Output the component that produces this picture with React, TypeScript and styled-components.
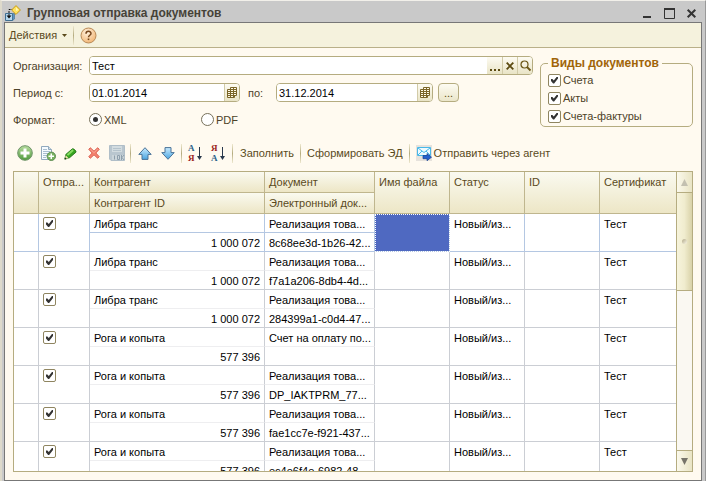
import React from "react";
import styled, { createGlobalStyle, css } from "styled-components";

const line = "#b5ac80";
const brown = "#5a4a1c";

const GlobalStyle = createGlobalStyle`
  *, *::before, *::after { box-sizing: border-box; }
  body { margin: 0; background: #c9c9c9; }
  body, button, input { font: 11px/14px "Liberation Sans", Arial, sans-serif; }
  button { margin: 0; padding: 0; border: 0; background: none; color: inherit; white-space: nowrap; }
  svg { display: block; flex: none; overflow: visible; }
`;

const Window = styled.main`
  display: flex;
  flex-direction: column;
  height: 100vh;
  padding: 0 3px 0 2px;
  background: #c9c9c9;
  border-top: 1px solid #f2f0ea;
  border-left: 2px solid #dedacb;
  border-right: 1px solid #999;
`;

const TitleBar = styled.header`
  display: flex;
  align-items: center;
  gap: 6px;
  height: 21px;
  flex: none;
  padding: 3px 3px 0 0;
  color: #464238;
`;

const Title = styled.h1`
  flex: 1;
  margin: 0;
  font-size: 12px;
  line-height: 16px;
  font-weight: bold;
  white-space: nowrap;
`;

const WindowButton = styled.button`
  display: grid;
  place-items: center;
  width: 16px;
  height: 16px;
`;

const Body = styled.div`
  flex: 1;
  min-height: 0;
  display: flex;
  flex-direction: column;
  border: 1px solid #777;
  background: #fffaf0;
`;

const MenuBar = styled.nav`
  display: flex;
  align-items: center;
  flex: none;
  height: 25px;
  padding: 0 4px;
  background: #f5f2dd;
  border-bottom: 1px solid #b9b088;
  color: ${brown};
`;

const MenuButton = styled.button`
  display: flex;
  align-items: center;
  gap: 5px;
`;

const Separator = styled.span<{ $gap: number }>`
  width: 1px;
  height: 19px;
  flex: none;
  margin: 0 ${(p) => p.$gap}px;
  background: linear-gradient(#eee8cf, #b5ac80 50%, #eee8cf);
`;

const Content = styled.div`
  flex: 1;
  min-height: 0;
  display: flex;
  flex-direction: column;
  padding: 8px;
`;

const Filters = styled.form`
  display: flex;
  align-items: flex-start;
  gap: 7px;
  flex: none;
  color: #4d4228;
`;

const Fields = styled.div`
  flex: 1;
  min-width: 0;
  display: flex;
  flex-direction: column;
  gap: 8px;
`;

const FieldRow = styled.div`
  display: flex;
  align-items: center;
  height: 19px;
`;

const Label = styled.label<{ $width: number; $indent?: boolean }>`
  width: ${(p) => p.$width}px;
  padding-left: ${(p) => (p.$indent ? 8 : 0)}px;
  flex: none;
  white-space: nowrap;
`;

const InputBox = styled.div<{ $width?: number }>`
  display: flex;
  height: 19px;
  border: 1px solid ${line};
  border-radius: 4px;
  overflow: hidden;
  background: #fff;
  ${(p) => (p.$width ? css`width: ${p.$width}px;` : css`flex: 1; min-width: 0;`)}
`;

const TextInput = styled.input`
  flex: 1;
  min-width: 0;
  border: 0;
  padding: 0 2px;
  background: #fff;
  color: #000;
  outline: 0;
`;

const InputButton = styled.button<{ $plain?: boolean }>`
  display: grid;
  place-items: center;
  width: 15px;
  flex: none;
  color: #5c4b12;
  background: linear-gradient(#fdfbf2, #e9e4c6);
  ${(p) => !p.$plain && css`border-left: 1px solid #d2cba8;`}
`;

const MoreButton = styled.button`
  display: grid;
  place-items: center;
  width: 21px;
  height: 19px;
  margin-left: 5px;
  border: 1px solid ${line};
  border-radius: 4px;
  background: linear-gradient(#fdfbf2, #ebe6ca);
  color: #5c4b12;
`;

const Choice = styled.label<{ $width?: number }>`
  display: flex;
  align-items: center;
  gap: 2px;
  height: 18px;
  white-space: nowrap;
  ${(p) => p.$width && css`width: ${p.$width}px;`}
`;

const CheckBox = styled.input.attrs({ type: "checkbox" })`
  appearance: none;
  display: block;
  width: 13px;
  height: 13px;
  flex: none;
  margin: 0;
  border: 1px solid #8f8560;
  border-radius: 2px;
  background: #fff;
  &:checked::before {
    content: "";
    display: block;
    width: 7px;
    height: 7px;
    margin: 2px;
    background: #333;
    clip-path: polygon(0 35%, 20% 35%, 40% 58%, 85% 0, 100% 0, 100% 28%, 45% 100%, 30% 100%, 0 65%);
  }
`;

const Radio = styled.input.attrs({ type: "radio" })`
  appearance: none;
  display: grid;
  place-items: center;
  width: 13px;
  height: 13px;
  flex: none;
  margin: 0;
  border: 1px solid #77705a;
  border-radius: 50%;
  background: #fff;
  &:checked::before {
    content: "";
    width: 5px;
    height: 5px;
    border-radius: 50%;
    background: #333;
  }
`;

const Group = styled.fieldset`
  width: 153px;
  height: 71px;
  flex: none;
  margin: 0;
  padding: 1px 7px 0;
  border: 1px solid ${line};
  border-radius: 5px;
`;

const Legend = styled.legend`
  padding: 0 3px;
  color: #a06408;
  font-size: 12px;
  font-weight: bold;
  line-height: 14px;
`;

const ToolBar = styled.div`
  display: flex;
  align-items: center;
  flex: none;
  height: 24px;
  margin: 12px 0 6px;
  color: ${brown};
`;

const ToolButton = styled.button`
  display: grid;
  place-items: center;
  width: 23px;
  height: 24px;
  flex: none;
`;

const TextButton = styled.button`
  display: flex;
  align-items: center;
  gap: 2px;
  height: 24px;
  padding: 0 5px;
`;

const Grid = styled.section`
  flex: 1;
  min-height: 0;
  display: flex;
  border: 1px solid ${line};
  background: #fff;
`;

const Viewport = styled.div`
  flex: 1;
  min-width: 0;
  overflow: hidden;
`;

const Table = styled.table`
  width: 100%;
  table-layout: fixed;
  border-collapse: separate;
  border-spacing: 0;
`;

const Col = styled.col<{ $width?: number }>`
  ${(p) => p.$width && css`width: ${p.$width}px;`}
`;

const HeadCell = styled.th`
  height: 21px;
  padding: 3px 2px 0 4px;
  overflow: hidden;
  vertical-align: top;
  text-align: left;
  white-space: nowrap;
  font-weight: normal;
  color: ${brown};
  background: linear-gradient(#fafaf0, #ede6c6);
  border-right: 1px solid #bfb68e;
  border-bottom: 1px solid #bfb68e;
  &:last-child:not([data-sub]) { border-right: 0; }
`;

const Cell = styled.td<{ $active?: boolean; $upper?: boolean; $right?: boolean; $last?: boolean; $selected?: boolean }>`
  height: 19px;
  padding: 3px 4px 0;
  overflow: hidden;
  vertical-align: top;
  white-space: nowrap;
  color: #000;
  text-align: ${(p) => (p.$right ? "right" : "left")};
  border-right: ${(p) => (p.$last ? 0 : 1)}px solid ${(p) => (p.$active ? "#b4c7e2" : "#cbced4")};
  border-bottom: 1px solid ${(p) => (p.$active ? "#b4c7e2" : p.$upper ? "#eeeef0" : "#cbced4")};
  ${(p) => p.$selected && css`
    background: #4f69c1;
    outline: 1px dotted #fff;
    outline-offset: -1px;
  `}
`;

const ScrollBar = styled.div`
  width: 16px;
  flex: none;
  display: flex;
  flex-direction: column;
  border-left: 1px solid ${line};
  background: #faf8f2;
`;

const ScrollButton = styled.button<{ $down?: boolean }>`
  display: grid;
  place-items: center;
  height: 21px;
  flex: none;
  background: linear-gradient(90deg, #fbf9ec, #e9e4c4);
  ${(p) => (p.$down ? css`border-top: 1px solid ${line};` : css`border-bottom: 1px solid ${line};`)}
`;

const Track = styled.div`
  flex: 1;
`;

const Thumb = styled.div`
  display: grid;
  place-items: center;
  height: 38%;
  border-bottom: 1px solid ${line};
  background: linear-gradient(90deg, #f7f4dc, #f0ecce 50%, #d9d2a8);
  &::before {
    content: "";
    width: 5px;
    height: 5px;
    border-radius: 50%;
    background: linear-gradient(135deg, #b0a888, #fbf8e8);
  }
`;

const FormIcon = () => (
  <svg width="17" height="17" viewBox="0 0 17 17">
    <path d="M1.5 8.500h7v7h-7z" fill="#b5d8ee" stroke="#3f6f92" />
    <path d="M8.500 9l2-1v6l-2 1.500z" fill="#5f95bd" stroke="#3f6f92" strokeWidth=".6" />
    <path d="M5 11V4.500h4" fill="none" stroke="#111" strokeDasharray="2 1" />
    <path d="M2.500 10.500h5L5 13.500z" fill="#111" />
    <path d="M12 .6 16.400 5 12 9.400 7.600 5z" fill="#ffe35e" stroke="#c79a17" />
    <path d="M12 2.300 14.500 5 12 6z" fill="#fff6b8" />
  </svg>
);

const HelpIcon = () => (
  <svg width="17" height="17" viewBox="0 0 17 17">
    <defs>
      <radialGradient id="help" cx="40%" cy="30%" r="70%">
        <stop offset="0" stopColor="#fff0dc" />
        <stop offset="1" stopColor="#f2b878" />
      </radialGradient>
    </defs>
    <circle cx="8.500" cy="8.500" r="7.500" fill="url(#help)" stroke="#b88a58" />
    <path d="M6 6.700C6 3.600 11 3.600 11 6.500 11 8.300 8.500 8.200 8.500 10.200" fill="none" stroke="#76461c" strokeWidth="1.500" />
    <path d="M7.700 11.500h1.600v1.600H7.700z" fill="#76461c" />
  </svg>
);

const CalendarIcon = () => (
  <svg width="10" height="11" viewBox="0 0 10 11">
    <path d="M3.500 .5h6v8h-2v2h-7v-8h3z" fill="#fffbe8" stroke="#7a6528" />
    <path d="M1 4.500h9M1 6.500h9M1 8.500h7M3.500 2.500h6M3.500 1v9M6.500 1v9" stroke="#7a6528" fill="none" />
  </svg>
);

const SearchIcon = () => (
  <svg width="11" height="11" viewBox="0 0 11 11" fill="none" stroke="#6b5614">
    <circle cx="4.500" cy="4.500" r="3.500" strokeWidth="1.200" />
    <path d="m7 7 3.500 3.500" strokeWidth="1.800" />
  </svg>
);

const CrossIcon = () => (
  <svg width="8" height="8" viewBox="0 0 8 8">
    <path d="m.7.7 6.600 6.600M7.300.7.7 7.300" stroke="#5c4b12" strokeWidth="1.900" />
  </svg>
);

const DotsIcon = () => (
  <svg width="10" height="11" viewBox="0 0 10 11" fill="#5c4b12">
    <path d="M0 9h2v2H0zM4 9h2v2H4zM8 9h2v2H8z" />
  </svg>
);

const AddIcon = () => (
  <svg width="16" height="16" viewBox="0 0 16 16">
    <defs>
      <linearGradient id="add" x2="0" y2="1">
        <stop offset="0" stopColor="#b9dda0" />
        <stop offset="1" stopColor="#4f9a3d" />
      </linearGradient>
    </defs>
    <circle cx="8" cy="8" r="7.300" fill="url(#add)" stroke="#6f9469" />
    <path d="M6.500 3.500h3v3h3v3h-3v3h-3v-3h-3v-3h3z" fill="#fff" />
  </svg>
);

const CopyIcon = () => (
  <svg width="16" height="16" viewBox="0 0 16 16">
    <path d="M1.500 1.500h7l3 3v10h-10z" fill="#f6fbff" stroke="#91a9bd" />
    <path d="M8.500 1.500v3h3" fill="#cfdfea" stroke="#91a9bd" />
    <path d="M3 4.500h4M3 6.500h7M3 8.500h6M3 10.500h4M3 12.500h3" stroke="#a9bed0" />
    <circle cx="11.300" cy="11.300" r="4.200" fill="#79b45f" stroke="#5f8d55" />
    <path d="M10.500 8.500H12v2h2V12h-2v2h-1.500v-2h-2v-1.500h2z" fill="#fff" />
  </svg>
);

const PencilIcon = () => (
  <svg width="13" height="13" viewBox="0 0 14 14">
    <path d="m1 13 1-5 7-6c1.500-.5 4 2 4 3.500L6 11.500z" fill="#36a51f" stroke="#25741a" />
    <path d="m3 8 6-5.500 1.500 1.500-6 5.500z" fill="#87dc62" />
    <path d="m1 13 .8-4L5 12z" fill="#f1e2b0" />
    <path d="m.5 13.500.6-2.500 1.900 1.900z" fill="#173d10" />
  </svg>
);

const DeleteIcon = () => (
  <svg width="12" height="12" viewBox="0 0 13 13">
    <path d="m2.500.8 4 3.700 4-3.700 1.700 1.700-3.700 4 3.700 4-1.700 1.700-4-3.700-4 3.700L.8 10.500l3.700-4-3.700-4z" fill="#f4826e" stroke="#d85a4c" />
    <path d="m2.500 2.200 4 4 4-4" fill="none" stroke="#f9a999" />
  </svg>
);

const SaveIcon = () => (
  <svg width="16" height="16" viewBox="0 0 16 16">
    <path d="M.5.5h15v15H2l-1.500-1.500z" fill="#b9c6cf" stroke="#b0bec8" />
    <path d="M3 1h10v6H3z" fill="#d3dce0" />
    <path d="M4 3.500h8M4 5.500h8" stroke="#b5c3cc" />
    <path d="M3 10h12v5H3z" fill="#cbd5da" />
    <path d="M5.500 10.500v4M8.500 10.500h2v4h-2zM12.500 10v5M15 10l-2 2.500L15 15" fill="none" stroke="#8e9fac" />
  </svg>
);

const ArrowIcon = ({ down = false }: { down?: boolean }) => {
  const id = down ? "down" : "up";
  return (
    <svg width="14" height="13" viewBox="0 0 14 13">
      <defs>
        <linearGradient id={id} x2="0" y2="1">
          <stop offset="0" stopColor="#c9ebff" />
          <stop offset="1" stopColor="#4aa4e0" />
        </linearGradient>
      </defs>
      <path d={down ? "M4 .6h6v5h3.200L7 12.300.8 5.600H4z" : "M4 12.400h6v-5h3.200L7 .7.8 7.400H4z"} fill={`url(#${id})`} stroke="#4b7398" />
    </svg>
  );
};

const SortIcon = ({ reverse = false }: { reverse?: boolean }) => (
  <svg width="15" height="20" viewBox="0 0 15 20" fontFamily="Liberation Serif, serif" fontSize="9" fontWeight="bold">
    <text x="0" y="8" fill={reverse ? "#9c1f20" : "#2b6289"}>{reverse ? "Я" : "А"}</text>
    <text x="0" y="18" fill={reverse ? "#2b6289" : "#9c1f20"}>{reverse ? "А" : "Я"}</text>
    <path d="M11.500 4v11" stroke="#29384c" />
    <path d="M9 13h5l-2.500 4z" fill="#29384c" />
  </svg>
);

const MailIcon = () => (
  <svg width="16" height="16" viewBox="0 0 16 16">
    <path d="M0 0h16v16H0z" fill="#e6e2dc" />
    <path d="M1.500 2.500h13v8h-13z" fill="#edfaff" stroke="#49b8e8" />
    <path d="m2 3 6 4.500L14 3M2 10l4-4M14 10l-4-4" fill="none" stroke="#49b8e8" />
    <path d="M7 10.500h4v-2l4.500 3.700-4.500 3.500v-2H7z" fill="#2461ce" stroke="#173f8f" strokeWidth=".7" />
  </svg>
);

const Triangle = ({ down = false, color }: { down?: boolean; color: string }) => (
  <svg width="7" height="7" viewBox="0 0 7 7">
    <path d={down ? "M0 0h7L3.500 7z" : "M0 7h7L3.500 0z"} fill={color} />
  </svg>
);

const rows = [
  ["Либра транс", "1 000 072", "Реализация това...", "8c68ee3d-1b26-42..."],
  ["Либра транс", "1 000 072", "Реализация това...", "f7a1a206-8db4-4d..."],
  ["Либра транс", "1 000 072", "Реализация това...", "284399a1-c0d4-47..."],
  ["Рога и копыта", "577 396", "Счет на оплату по...", ""],
  ["Рога и копыта", "577 396", "Реализация това...", "DP_IAKTPRM_77..."],
  ["Рога и копыта", "577 396", "Реализация това...", "fae1cc7e-f921-437..."],
  ["Рога и копыта", "577 396", "Реализация това...", "ec4e6f4e-6982-48..."],
];

export default function App() {
  return (
    <Window>
      <GlobalStyle />
      <TitleBar>
        <FormIcon />
        <Title>Групповая отправка документов</Title>
        <WindowButton aria-label="Свернуть">
          <svg width="8" height="10"><path d="M0 8h8v2H0z" fill="#333" /></svg>
        </WindowButton>
        <WindowButton aria-label="Развернуть">
          <svg width="11" height="11"><path d="M.5 1h10v9.500H.5z" fill="none" stroke="#333" /><path d="M0 0h11v2H0z" fill="#333" /></svg>
        </WindowButton>
        <WindowButton aria-label="Закрыть">
          <svg width="9" height="9"><path d="m.7.7 7.600 7.600M8.300.7.7 8.300" stroke="#333" strokeWidth="2" /></svg>
        </WindowButton>
      </TitleBar>
      <Body>
        <MenuBar>
          <MenuButton>
            Действия
            <svg width="5" height="3"><path d="M0 0h5L2.500 3z" fill={brown} /></svg>
          </MenuButton>
          <Separator $gap={6} />
          <MenuButton aria-label="Справка"><HelpIcon /></MenuButton>
        </MenuBar>
        <Content>
          <Filters>
            <Fields>
              <FieldRow>
                <Label $width={76} htmlFor="org">Организация:</Label>
                <InputBox>
                  <TextInput id="org" defaultValue="Тест" />
                  <InputButton $plain type="button" aria-label="Выбрать"><DotsIcon /></InputButton>
                  <InputButton type="button" aria-label="Очистить"><CrossIcon /></InputButton>
                  <InputButton type="button" aria-label="Открыть"><SearchIcon /></InputButton>
                </InputBox>
              </FieldRow>
              <FieldRow>
                <Label $width={76} htmlFor="from">Период с:</Label>
                <InputBox $width={151}>
                  <TextInput id="from" defaultValue="01.01.2014" />
                  <InputButton type="button" aria-label="Календарь"><CalendarIcon /></InputButton>
                </InputBox>
                <Label $width={36} $indent htmlFor="to">по:</Label>
                <InputBox $width={157}>
                  <TextInput id="to" defaultValue="31.12.2014" />
                  <InputButton type="button" aria-label="Календарь"><CalendarIcon /></InputButton>
                </InputBox>
                <MoreButton type="button">...</MoreButton>
              </FieldRow>
              <FieldRow role="radiogroup" aria-label="Формат">
                <Label as="span" $width={76}>Формат:</Label>
                <Choice $width={112}><Radio name="format" defaultChecked />XML</Choice>
                <Choice><Radio name="format" />PDF</Choice>
              </FieldRow>
            </Fields>
            <Group>
              <Legend>Виды документов</Legend>
              {["Счета", "Акты", "Счета-фактуры"].map((name) => (
                <Choice key={name}><CheckBox defaultChecked />{name}</Choice>
              ))}
            </Group>
          </Filters>
          <ToolBar>
            <ToolButton aria-label="Добавить"><AddIcon /></ToolButton>
            <ToolButton aria-label="Скопировать"><CopyIcon /></ToolButton>
            <ToolButton aria-label="Изменить"><PencilIcon /></ToolButton>
            <ToolButton aria-label="Удалить"><DeleteIcon /></ToolButton>
            <ToolButton aria-label="Сохранить" disabled><SaveIcon /></ToolButton>
            <Separator $gap={2} />
            <ToolButton aria-label="Вверх"><ArrowIcon /></ToolButton>
            <ToolButton aria-label="Вниз"><ArrowIcon down /></ToolButton>
            <Separator $gap={2} />
            <ToolButton aria-label="По возрастанию"><SortIcon /></ToolButton>
            <ToolButton aria-label="По убыванию"><SortIcon reverse /></ToolButton>
            <Separator $gap={2} />
            <TextButton>Заполнить</TextButton>
            <Separator $gap={1} />
            <TextButton>Сформировать ЭД</TextButton>
            <Separator $gap={1} />
            <TextButton><MailIcon />Отправить через агент</TextButton>
          </ToolBar>
          <Grid>
            <Viewport>
              <Table>
                <colgroup>
                  {[25, 51, 175, 110, 75, 75, 75].map((w, i) => <Col key={i} $width={w} />)}
                  <Col />
                </colgroup>
                <thead>
                  <tr>
                    <HeadCell rowSpan={2} />
                    <HeadCell rowSpan={2}>Отпра...</HeadCell>
                    <HeadCell>Контрагент</HeadCell>
                    <HeadCell>Документ</HeadCell>
                    <HeadCell rowSpan={2}>Имя файла</HeadCell>
                    <HeadCell rowSpan={2}>Статус</HeadCell>
                    <HeadCell rowSpan={2}>ID</HeadCell>
                    <HeadCell rowSpan={2}>Сертификат</HeadCell>
                  </tr>
                  <tr>
                    <HeadCell>Контрагент ID</HeadCell>
                    <HeadCell data-sub>Электронный док...</HeadCell>
                  </tr>
                </thead>
                <tbody>
                  {rows.map(([name, id, doc, file], i) => {
                    const a = i === 0;
                    return (
                      <React.Fragment key={i}>
                        <tr>
                          <Cell $active={a} rowSpan={2} />
                          <Cell $active={a} rowSpan={2}><CheckBox defaultChecked aria-label={`Отправить: ${name}`} /></Cell>
                          <Cell $active={a} $upper>{name}</Cell>
                          <Cell $active={a} $upper>{doc}</Cell>
                          <Cell $active={a} rowSpan={2} $selected={a} />
                          <Cell $active={a} rowSpan={2}>Новый/из...</Cell>
                          <Cell $active={a} rowSpan={2} />
                          <Cell $active={a} rowSpan={2} $last>Тест</Cell>
                        </tr>
                        <tr>
                          <Cell $active={a} $right>{id}</Cell>
                          <Cell $active={a}>{file}</Cell>
                        </tr>
                      </React.Fragment>
                    );
                  })}
                </tbody>
              </Table>
            </Viewport>
            <ScrollBar>
              <ScrollButton aria-label="Прокрутить вверх"><Triangle color="#c3c0b0" /></ScrollButton>
              <Track><Thumb /></Track>
              <ScrollButton $down aria-label="Прокрутить вниз"><Triangle down color="#77746a" /></ScrollButton>
            </ScrollBar>
          </Grid>
        </Content>
      </Body>
    </Window>
  );
}
